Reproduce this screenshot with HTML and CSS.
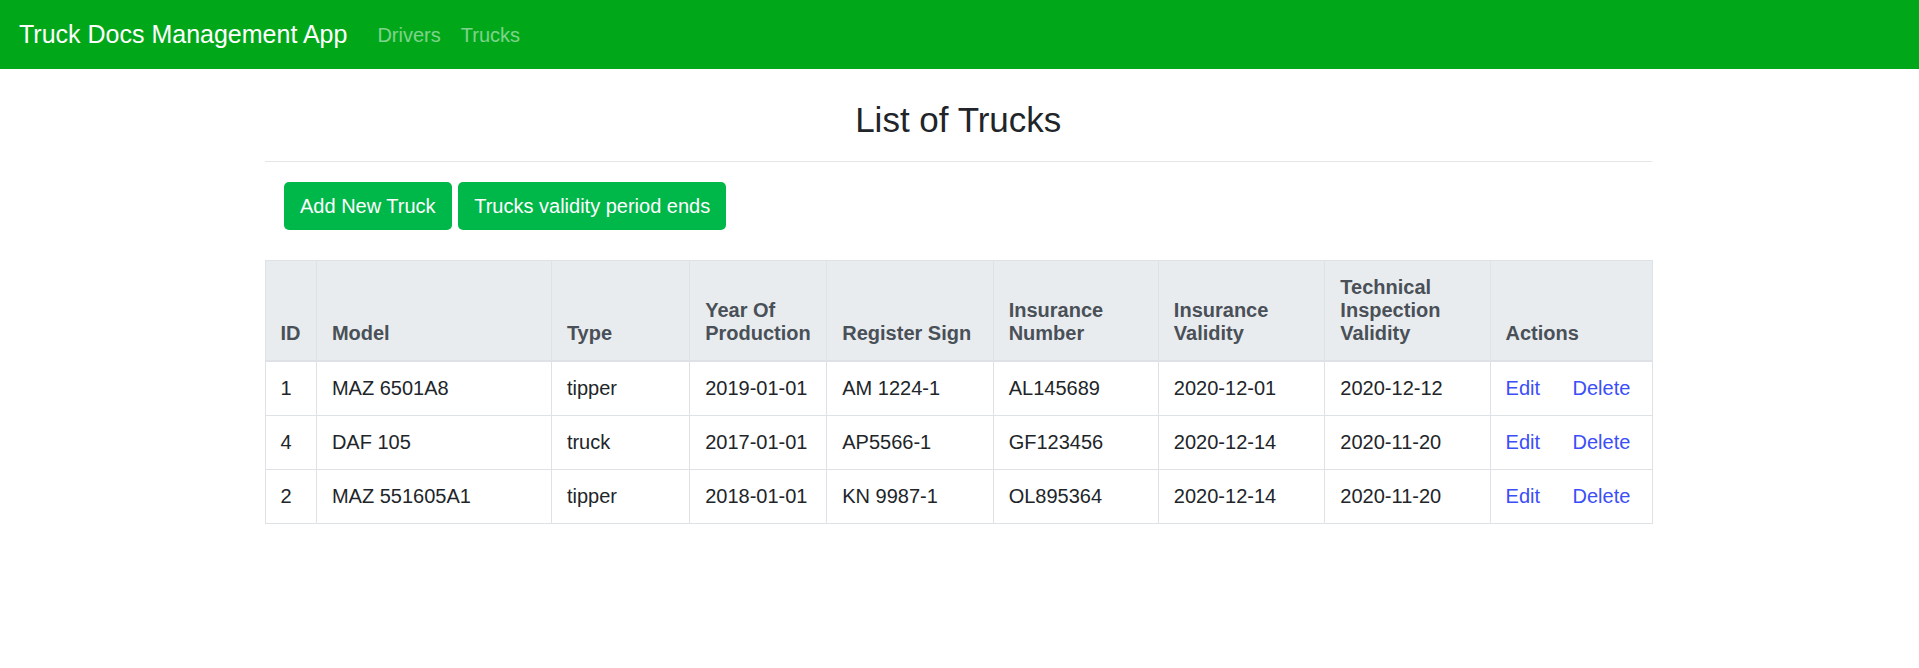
FILE: index.html
```html
<!DOCTYPE html>
<html lang="en">
<head>
<meta charset="utf-8">
<title>Truck Docs Management App</title>
<link rel="stylesheet" href="styles.css">
</head>
<body>
<nav class="navbar">
  <a class="brand" href="#">Truck Docs Management App</a>
  <ul class="nav">
    <li><a class="nav-link" href="#">Drivers</a></li>
    <li><a class="nav-link" href="#">Trucks</a></li>
  </ul>
</nav>
<main class="container">
  <h3 class="title">List of Trucks</h3>
  <hr class="divider">
  <div class="actions-bar">
    <a class="btn" href="#">Add New Truck</a>
    <a class="btn" href="#">Trucks validity period ends</a>
  </div>
  <table class="table">
    <thead>
      <tr>
        <th class="c-id">ID</th>
        <th class="c-model">Model</th>
        <th class="c-type">Type</th>
        <th class="c-year">Year Of Production</th>
        <th class="c-reg">Register Sign</th>
        <th class="c-insn">Insurance Number</th>
        <th class="c-insv">Insurance Validity</th>
        <th class="c-tech">Technical Inspection Validity</th>
        <th class="c-act">Actions</th>
      </tr>
    </thead>
    <tbody>
      <tr>
        <td>1</td><td>MAZ 6501A8</td><td>tipper</td><td>2019-01-01</td><td>AM 1224-1</td><td>AL145689</td><td>2020-12-01</td><td>2020-12-12</td>
        <td><span class="row-links"><a href="#">Edit</a><a href="#">Delete</a></span></td>
      </tr>
      <tr>
        <td>4</td><td>DAF 105</td><td>truck</td><td>2017-01-01</td><td>AP5566-1</td><td>GF123456</td><td>2020-12-14</td><td>2020-11-20</td>
        <td><span class="row-links"><a href="#">Edit</a><a href="#">Delete</a></span></td>
      </tr>
      <tr>
        <td>2</td><td>MAZ 551605A1</td><td>tipper</td><td>2018-01-01</td><td>KN 9987-1</td><td>OL895364</td><td>2020-12-14</td><td>2020-11-20</td>
        <td><span class="row-links"><a href="#">Edit</a><a href="#">Delete</a></span></td>
      </tr>
    </tbody>
  </table>
</main>
</body>
</html>
```
FILE: styles.css
```css
* { box-sizing: border-box; }
html, body {
  margin: 0;
  padding: 0;
  background: #fff;
}
body {
  font-family: "Liberation Sans", Arial, sans-serif;
  font-size: 20px;
  color: #212529;
}
a { text-decoration: none; }

.navbar {
  height: 69px;
  background: #00a819;
  display: flex;
  align-items: center;
  padding: 0 20px 0 19px;
}
.brand {
  color: #fff;
  font-size: 25px;
  line-height: 1.5;
  margin-right: 20px;
}
.nav {
  list-style: none;
  margin: 0;
  padding: 0;
  display: flex;
}
.nav-link {
  display: block;
  padding: 0 10px;
  font-size: 20px;
  line-height: 1.5;
  color: rgba(255, 255, 255, 0.5);
}

.container {
  max-width: 1425px;
  margin: 0 auto;
  padding: 0 20px 0 17.5px;
}
.title {
  margin: 30px 0 10px;
  font-size: 35px;
  font-weight: 400;
  line-height: 42px;
  text-align: center;
  color: #212529;
}
.divider {
  margin: 20px 0;
  border: 0;
  border-top: 1px solid rgba(0, 0, 0, 0.1);
  height: 0;
}
.actions-bar {
  display: flex;
  gap: 6.6px;
  padding-left: 19.5px;
  margin-bottom: 30px;
}
.btn {
  display: inline-block;
  height: 48px;
  padding: 0 16px;
  line-height: 48px;
  font-size: 20px;
  color: #fff;
  background: #00b74a;
  border-radius: 5px;
}

.table {
  width: 100%;
  border-collapse: collapse;
  table-layout: fixed;
  border: 1px solid #dee2e6;
}
.table th,
.table td {
  padding: 15px;
  line-height: 23px;
  border: 1px solid #dee2e6;
  text-align: left;
}
.table th {
  background: #e9ecef;
  color: #495057;
  font-weight: 700;
  vertical-align: bottom;
  border-bottom: 2px solid #dee2e6;
}
.table td { vertical-align: top; }
.c-id { width: 51.4px; }
.c-model { width: 235px; }
.c-type { width: 138.3px; }
.c-year { width: 137.1px; }
.c-reg { width: 166.4px; }
.c-insn { width: 165.2px; }
.c-insv { width: 166.5px; }
.c-tech { width: 165.2px; }
.c-act { width: 162.4px; }

.row-links {
  display: flex;
  gap: 32.5px;
}
.row-links a { color: #3b4ef8; }
```
